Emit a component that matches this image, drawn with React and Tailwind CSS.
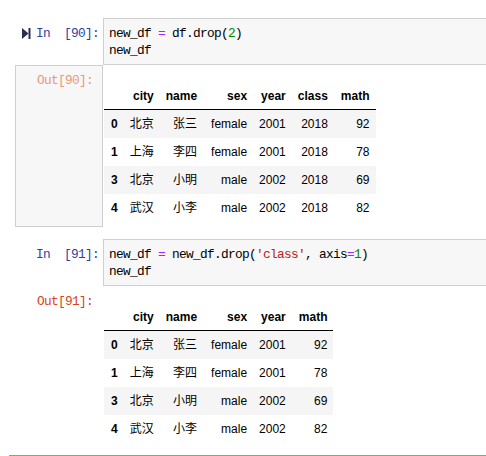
import React from "react";

const rows = [
  { idx: "0", city: "北京", name: "张三", sex: "female", year: "2001", cls: "2018", math: "92" },
  { idx: "1", city: "上海", name: "李四", sex: "female", year: "2001", cls: "2018", math: "78" },
  { idx: "3", city: "北京", name: "小明", sex: "male", year: "2002", cls: "2018", math: "69" },
  { idx: "4", city: "武汉", name: "小李", sex: "male", year: "2002", cls: "2018", math: "82" },
];

const mono = { fontFamily: '"Liberation Mono", "DejaVu Sans Mono", monospace' };

const RunIcon = () => (
  <svg width="9" height="11" viewBox="0 0 9 11" className="mt-[3px]">
    <polygon points="0,0 6.5,5.5 0,11" fill="#2b2f4a" />
    <rect x="6.5" y="0" width="2" height="11" fill="#2b2f4a" />
  </svg>
);

const InPrompt = ({ n, icon }) => (
  <div className="w-[103px] shrink-0 flex justify-end items-start gap-[5px] pr-[4px] pt-[7px] leading-[17px] text-[12.8px] tracking-[-0.68px] text-[#303f9f] whitespace-pre" style={mono}>
    {icon && <RunIcon />}
    <span>{`In  [${n}]:`}</span>
  </div>
);

const CodeBox = ({ children }) => (
  <div className="flex-1 -mr-[4px] border border-[#cfcfcf] bg-[#f7f7f7] pl-[5px] pt-[6px] pb-[5px] leading-[17px] text-[12.8px] tracking-[-0.68px] text-black whitespace-pre" style={mono}>
    {children}
  </div>
);

const th = "px-[6px] py-[6px] leading-[14px] text-right font-bold";
const td = "px-[6px] py-[6px] leading-[16px] text-right";

const DataTable = ({ withClass }) => (
  <table className="mt-[18px] border-collapse text-[12px] text-black" style={{ fontFamily: '"Liberation Sans", Arial, "Noto Sans CJK SC", sans-serif' }}>
    <thead>
      <tr className="border-b border-black">
        <th className={th + " pl-[7px]"}></th>
        <th className={th}>city</th>
        <th className={th}>name</th>
        <th className={th + " pl-[8px]"}>sex</th>
        <th className={th}>year</th>
        {withClass && <th className={th}>class</th>}
        <th className={th + " pl-[7px]"}>math</th>
      </tr>
    </thead>
    <tbody>
      {rows.map((r, i) => (
        <tr key={r.idx} className={i % 2 === 0 ? "bg-[#f5f5f5]" : "bg-white"}>
          <th className={td + " pl-[7px] font-bold"}>{r.idx}</th>
          <td className={td}>{r.city}</td>
          <td className={td}>{r.name}</td>
          <td className={td + " pl-[8px]"}>{r.sex}</td>
          <td className={td}>{r.year}</td>
          {withClass && <td className={td}>{r.cls}</td>}
          <td className={td + " pl-[7px]"}>{r.math}</td>
        </tr>
      ))}
    </tbody>
  </table>
);

const OutPrompt = ({ n, boxed }) => (
  <div
    className={
      "ml-[15px] w-[88px] shrink-0 border pr-[9px] pt-[6px] text-right leading-[17px] text-[12.8px] tracking-[-0.68px] whitespace-pre " +
      (boxed ? "border-[#cfcfcf] bg-[#f7f7f7] text-[#e8977c]" : "border-transparent text-[#d84315]")
    }
    style={mono}
  >
    {`Out[${n}]:`}
  </div>
);

export default function App() {
  return (
    <div className="w-[486px] h-[456px] overflow-hidden bg-white pt-[18px]">
      {/* cell 90 */}
      <div className="flex">
        <InPrompt n="90" icon />
        <CodeBox>
          {"new_df "}
          <span className="text-[#aa22ff]">=</span>
          {" df.drop("}
          <span className="text-[#008800]">2</span>
          {")\nnew_df"}
        </CodeBox>
      </div>
      <div className="flex items-stretch">
        <OutPrompt n="90" boxed />
        <div className="ml-[1px] pb-[5px]">
          <DataTable withClass />
        </div>
      </div>

      {/* cell 91 */}
      <div className="flex mt-[12px]">
        <InPrompt n="91" />
        <CodeBox>
          {"new_df "}
          <span className="text-[#aa22ff]">=</span>
          {" new_df.drop("}
          <span className="text-[#ba2121]">'class'</span>
          {", axis"}
          <span className="text-[#aa22ff]">=</span>
          <span className="text-[#008800]">1</span>
          {")\nnew_df"}
        </CodeBox>
      </div>
      <div className="flex items-stretch">
        <OutPrompt n="91" />
        <div className="ml-[1px] pb-[5px]">
          <DataTable />
        </div>
      </div>

      <div className="ml-[9px] mt-[7px] border-t border-[#66bb6a]"></div>
    </div>
  );
}
